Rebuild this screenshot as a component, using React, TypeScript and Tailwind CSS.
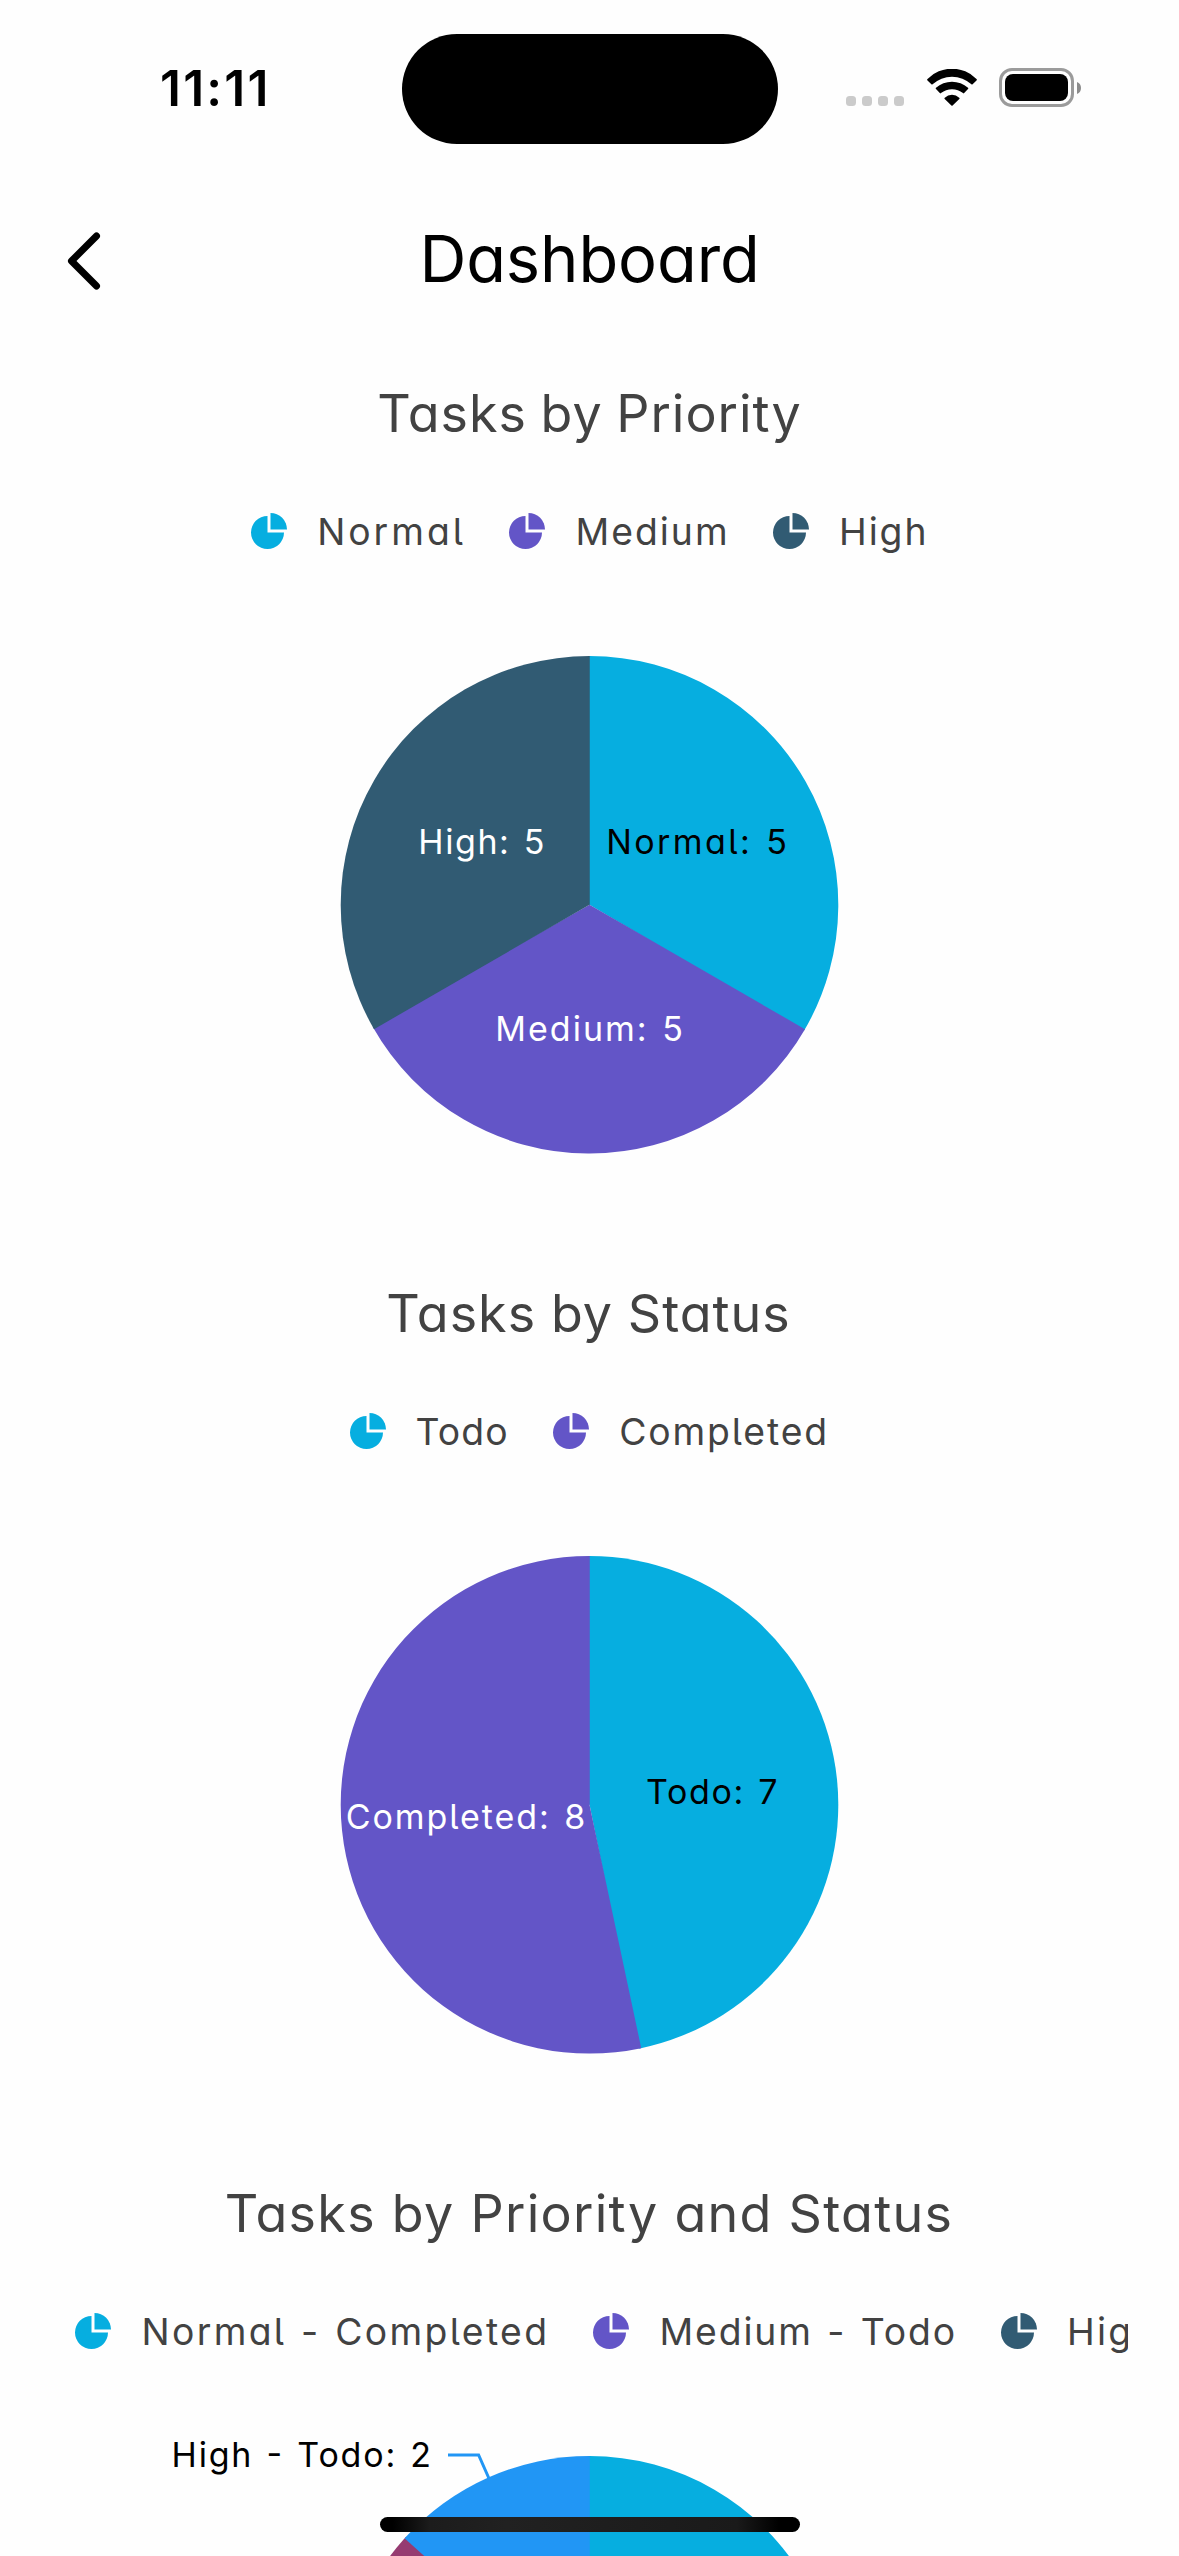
import type { ReactNode } from "react";

type LegendEntry = { label: string; color: string; spacing: string };
type Slice = { color: string; value: number };
type ChartLabel = { text: string; x: number; y: number; width: number; fill: string };

const CYAN = "#06aee0";
const PURPLE = "#6355c7";
const SLATE = "#315b73";
const BLUE = "#2196f5";
const MAGENTA = "#963b71";

function StatusBar() {
  return (
    <div className="relative flex h-[177px] shrink-0 items-start justify-between pl-[160px] pr-[98px]">
      <span className="mt-[64px] text-[49.5px] leading-[48px] font-semibold tracking-[2.2px]">11:11</span>
      <div className="absolute top-[33.5px] left-1/2 h-[110.5px] w-[376px] -translate-x-1/2 rounded-full bg-black" />
      <div className="mt-[68px] flex">
        <div className="mt-[28px] flex gap-[6px]">
          <i className="size-[10px] rounded-[3.5px] bg-[#cbcbcb]" />
          <i className="size-[10px] rounded-[3.5px] bg-[#cbcbcb]" />
          <i className="size-[10px] rounded-[3.5px] bg-[#cbcbcb]" />
          <i className="size-[10px] rounded-[3.5px] bg-[#cbcbcb]" />
        </div>
        <svg className="mt-[1px] ml-[22.5px] h-[37px] w-[50px]" viewBox="0 0 50 37">
          <path d="M.5 11.4Q-.4 10.7.5 9.9A34.5 34.5 0 0 1 49.5 9.9Q50.4 10.7 49.5 11.4L45.6 15.3Q45 15.9 44.4 15.3A28.5 28.5 0 0 0 5.6 15.3Q5 15.9 4.4 15.3ZM9 20Q8.3 19.3 9 18.7A24.2 24.2 0 0 1 41 18.7Q41.7 19.3 41 20L37.2 24.1Q36.7 24.8 36 24.1A17.8 17.8 0 0 0 14 24.1Q13.3 24.8 12.8 24.1ZM17.7 30Q17.1 29.3 17.8 28.7A10.5 10.5 0 0 1 32.2 28.7Q32.9 29.3 32.3 30L25.6 36.6Q25 37.1 24.4 36.6Z" />
        </svg>
        <div className="ml-[22.5px] h-[39px] w-[75px] rounded-[13px] border-3 border-[#9b9b9b] p-[3px]">
          <div className="size-full rounded-[8px] bg-black" />
        </div>
        <svg className="mt-[13.5px] ml-[3px] h-[12px] w-[4px]" viewBox="0 0 4 12">
          <path d="M0 0Q4 1.6 4 6T0 12Z" fill="#8c8c8c" />
        </svg>
      </div>
    </div>
  );
}

function Header() {
  return (
    <header className="relative flex h-[163px] shrink-0 items-center justify-center">
      <svg className="absolute top-[53px] left-[64px] h-[62px] w-[40px]" viewBox="0 0 40 62" fill="none">
        <path
          d="M32.5 6L7.5 31L32.5 56"
          stroke="black"
          strokeWidth="7"
          strokeLinecap="round"
          strokeLinejoin="round"
        />
      </svg>
      <h1 className="text-[65px] leading-[80px] tracking-[-0.11px]">Dashboard</h1>
    </header>
  );
}

function PieGlyph({ color }: { color: string }) {
  return (
    <svg className="size-[36px] shrink-0" viewBox="0 0 36 36" fill={color}>
      <path d="M16.5 3A16.5 16.5 0 1 0 33 19.5H16.5Z" />
      <path d="M19.5 0A16.5 16.5 0 0 1 36 16.5H19.5Z" />
    </svg>
  );
}

function Legend({ entries, scrollable }: { entries: LegendEntry[]; scrollable?: boolean }) {
  return (
    <div
      className={
        scrollable
          ? "mr-[51.5px] ml-[75px] flex h-[90px] items-center gap-[43.5px] overflow-hidden"
          : "flex h-[90px] items-center justify-center gap-[43px]"
      }
    >
      {entries.map((e) => (
        <div key={e.label} className="flex shrink-0 items-center gap-[30.5px]">
          <PieGlyph color={e.color} />
          <span className={`pt-px text-[37.3px] leading-[60px] whitespace-nowrap ${e.spacing}`}>{e.label}</span>
        </div>
      ))}
    </div>
  );
}

const CX = 589.5;
const CY = 328.8;
const R = 248.8;

// Every slice but the last runs slightly under its neighbour, so no seam shows between them.
function slicePaths(slices: Slice[]) {
  const total = slices.reduce((sum, s) => sum + s.value, 0);
  let acc = 0;
  return slices.map((s, i) => {
    const a0 = (acc / total) * 2 * Math.PI;
    acc += s.value;
    const overlap = i < slices.length - 1 ? 0.01 : 0;
    const a1 = (acc / total) * 2 * Math.PI + overlap;
    const point = (a: number) => `${CX + R * Math.sin(a)} ${CY - R * Math.cos(a)}`;
    const large = a1 - a0 > Math.PI ? 1 : 0;
    return { color: s.color, d: `M${CX} ${CY}L${point(a0)}A${R} ${R} 0 ${large} 1 ${point(a1)}Z` };
  });
}

function PieChart({ slices, labels, leader }: { slices: Slice[]; labels: ChartLabel[]; leader?: string }) {
  return (
    <svg className="block h-[664px] w-[1179px]" viewBox="0 0 1179 664">
      <path d={`M${CX - 1.5} ${CY}V${CY - R}H${CX + 1.5}V${CY}Z`} fill={slices[slices.length - 1].color} />
      {slicePaths(slices).map((p, i) => (
        <path key={i} d={p.d} fill={p.color} />
      ))}
      {leader && <path d={leader} fill="none" stroke={BLUE} strokeWidth="3" />}
      {labels.map((l) => (
        <text key={l.text} x={l.x} y={l.y} textLength={l.width} fill={l.fill} className="text-[34px] [word-spacing:2px]">
          {l.text}
        </text>
      ))}
    </svg>
  );
}

function Section({ title, spacing, children }: { title: string; spacing: string; children: ReactNode }) {
  return (
    <section className="h-[900px] shrink-0 text-[#424242]">
      <h2 className={`flex h-[146px] items-center justify-center pt-[2px] text-[52px] whitespace-pre ${spacing}`}>
        {title}
      </h2>
      {children}
    </section>
  );
}

export default function App() {
  return (
    <div className="relative flex h-[2556px] w-[1179px] flex-col overflow-hidden bg-[#fefefe] font-['Inter',sans-serif] text-black [font-feature-settings:'cv11','cv05']">
      <StatusBar />
      <Header />

      <Section title="Tasks by Priority" spacing="tracking-[1px] [word-spacing:-2px]">
        <Legend
          entries={[
            { label: "Normal", color: CYAN, spacing: "tracking-[3px]" },
            { label: "Medium", color: PURPLE, spacing: "tracking-[2px]" },
            { label: "High", color: SLATE, spacing: "tracking-[1.9px]" },
          ]}
        />
        <PieChart
          slices={[
            { color: CYAN, value: 5 },
            { color: PURPLE, value: 5 },
            { color: SLATE, value: 5 },
          ]}
          labels={[
            { text: "Normal: 5", x: 606.3, y: 277.7, width: 180.5, fill: "#000" },
            { text: "Medium: 5", x: 495.3, y: 464.6, width: 187.5, fill: "#fff" },
            { text: "High: 5", x: 418.3, y: 277.7, width: 126, fill: "#fff" },
          ]}
        />
      </Section>

      <Section title="Tasks by Status" spacing="pr-[2px] tracking-[1px] [word-spacing:-0.8px]">
        <Legend
          entries={[
            { label: "Todo", color: CYAN, spacing: "-ml-px mr-px tracking-[1.1px]" },
            { label: "Completed", color: PURPLE, spacing: "tracking-[1.86px]" },
          ]}
        />
        <PieChart
          slices={[
            { color: CYAN, value: 7 },
            { color: PURPLE, value: 8 },
          ]}
          labels={[
            { text: "Todo: 7", x: 646, y: 328, width: 131.5, fill: "#000" },
            { text: "Completed: 8", x: 345.7, y: 352.7, width: 239.5, fill: "#fff" },
          ]}
        />
      </Section>

      <Section title="Tasks by Priority and Status" spacing="pr-px tracking-[1.3px]">
        <Legend
          scrollable
          entries={[
            { label: "Normal - Completed", color: CYAN, spacing: "tracking-[2.35px] [word-spacing:1.8px]" },
            { label: "Medium - Todo", color: PURPLE, spacing: "tracking-[1.9px] [word-spacing:2px]" },
            { label: "High - Completed", color: SLATE, spacing: "tracking-[2.2px]" },
          ]}
        />
        <PieChart
          slices={[
            { color: CYAN, value: 5 },
            { color: PURPLE, value: 5 },
            { color: MAGENTA, value: 3 },
            { color: BLUE, value: 2 },
          ]}
          labels={[{ text: "High - Todo: 2", x: 171.6, y: 90.7, width: 259.5, fill: "#000" }]}
          leader="M448 79H478.6L489 102.5"
        />
      </Section>

      <div className="absolute top-[2517px] left-[380px] h-[15px] w-[420px] rounded-full bg-[linear-gradient(90deg,#000_3%,#1c1c1c_12%,#212121_30%,#1a1a1a_85%,#000_95%)]" />
    </div>
  );
}
